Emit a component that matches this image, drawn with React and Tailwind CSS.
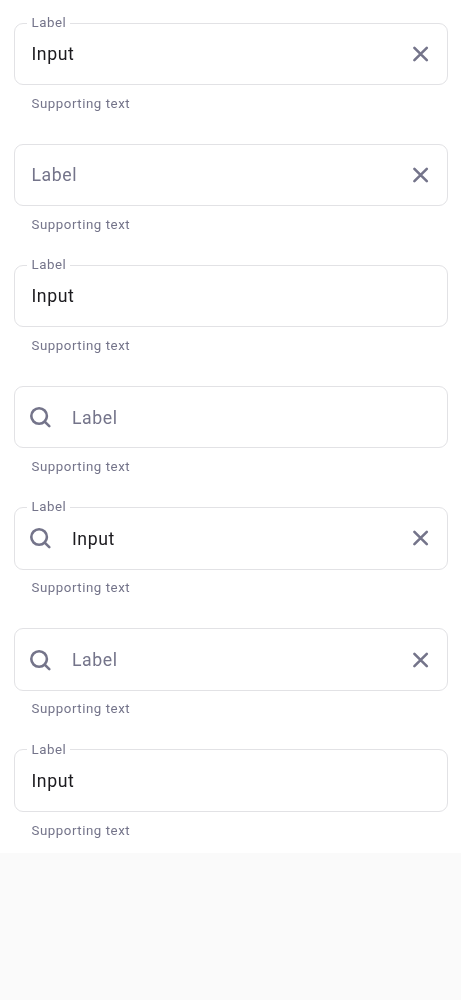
const fields = [
  { value: 'Input', clear: true },
  { clear: true },
  { value: 'Input' },
  { search: true },
  { value: 'Input', search: true, clear: true },
  { search: true, clear: true },
  { value: 'Input' },
];

function SearchIcon() {
  return (
    <svg className="mr-[19px] size-[26px] shrink-0" viewBox="0 0 26 26" fill="none" stroke="#74748a" strokeWidth="2.6" strokeLinecap="round">
      <circle cx="12.1" cy="12" r="7.8" />
      <path d="M17.7 17.6L22.3 22.2" />
    </svg>
  );
}

function ClearIcon() {
  return (
    <svg className="ml-auto size-[26px] shrink-0" viewBox="0 0 26 26" fill="none" stroke="#74748a" strokeWidth="2.6" strokeLinecap="round">
      <path d="M7.4 6.8L19.8 19.2M19.8 6.8L7.4 19.2" />
    </svg>
  );
}

function TextField({ value, search, clear }) {
  return (
    <div className="h-[121.17px] text-[#74748a]">
      <div
        className={`relative flex h-[62.5px] items-center rounded-[9px] border border-[#e2e2e5] pr-[13.5px] ${search ? 'pl-[12.5px]' : 'pl-[17px]'}`}
      >
        {value && (
          <span className="absolute -top-[9.75px] left-[12px] bg-white pl-[5px] pr-[4px] text-[13.3px] leading-[18px] tracking-[0.54px]">
            Label
          </span>
        )}
        {search && <SearchIcon />}
        <span className={`relative top-[0.3px] text-[17.7px] leading-[26px] tracking-[0.55px] ${value ? 'text-[#1c1b1f]' : ''}`}>
          {value || 'Label'}
        </span>
        {clear && <ClearIcon />}
      </div>
      <p className="mt-[9.6px] pl-[18px] text-[13.3px] leading-[18px] tracking-[0.54px]">Supporting text</p>
    </div>
  );
}

export default function App() {
  return (
    <main className="min-h-screen bg-[#fafafa] font-[Roboto,sans-serif] antialiased">
      <div className="h-[853px] bg-white px-[13.5px] pt-[22.5px] will-change-transform">
        {fields.map((field, i) => (
          <TextField key={i} {...field} />
        ))}
      </div>
    </main>
  );
}
